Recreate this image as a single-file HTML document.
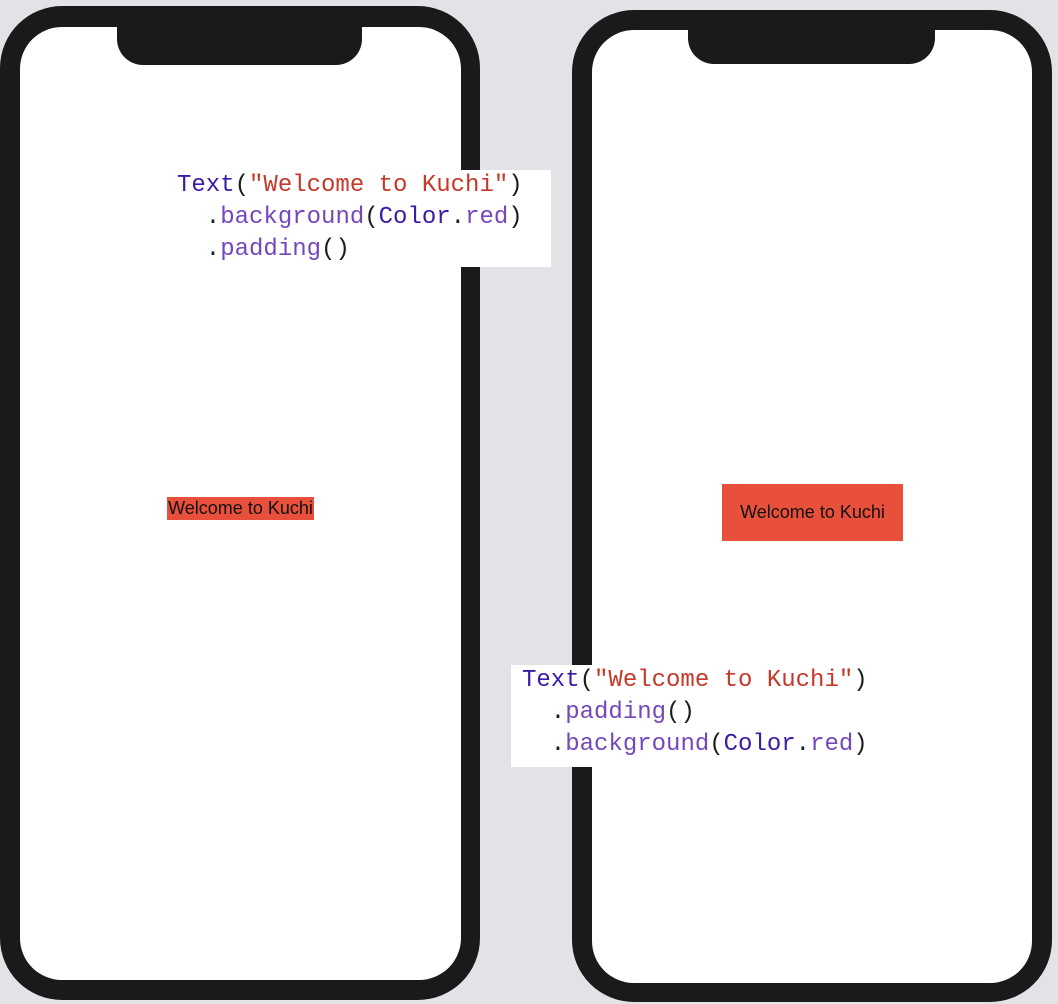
<!DOCTYPE html>
<html><head><style>
body{margin:0;width:1058px;height:1004px;background:#e2e3e7;position:relative;overflow:hidden;font-family:"Liberation Sans",sans-serif}
.ph{position:absolute;background:#1a1a1a;border-radius:62px}
.sc{position:absolute;background:#fff;border-radius:42px}
.notch{position:absolute;background:#1a1a1a;border-radius:0 0 26px 26px}
.code{position:absolute;background:#fff;font-family:"Liberation Mono",monospace;font-size:24px;line-height:32px;color:#1c1c1c;white-space:pre}
.k{color:#3a1aa8}.s{color:#c5382a}.m{color:#7447bd}
.lab{position:absolute;background:#e8503b;color:#111;font-size:18px;display:flex;align-items:center;justify-content:center;white-space:nowrap}
</style></head><body>
<div class="ph" style="left:0;top:6px;width:480px;height:994px"></div>
<div class="sc" style="left:20px;top:27px;width:441px;height:953px"></div>
<div class="notch" style="left:117px;top:26px;width:245px;height:39px"></div>

<div class="ph" style="left:572px;top:10px;width:480px;height:992px"></div>
<div class="sc" style="left:592px;top:30px;width:440px;height:953px"></div>
<div class="notch" style="left:688px;top:29px;width:247px;height:35px"></div>

<div class="code" style="left:167px;top:170px;width:374px;height:97px;padding:0 0 0 10px"><span class="k">Text</span>(<span class="s">"Welcome to Kuchi"</span>)
  .<span class="m">background</span>(<span class="k">Color</span>.<span class="m">red</span>)
  .<span class="m">padding</span>()</div>

<div class="lab" style="left:167px;top:497px;width:147px;height:23px">Welcome to Kuchi</div>
<div class="lab" style="left:722px;top:484px;width:181px;height:57px">Welcome to Kuchi</div>

<div class="code" style="left:511px;top:665px;width:380px;height:102px;padding:0 0 0 11px"><span class="k">Text</span>(<span class="s">"Welcome to Kuchi"</span>)
  .<span class="m">padding</span>()
  .<span class="m">background</span>(<span class="k">Color</span>.<span class="m">red</span>)</div>
</body></html>
